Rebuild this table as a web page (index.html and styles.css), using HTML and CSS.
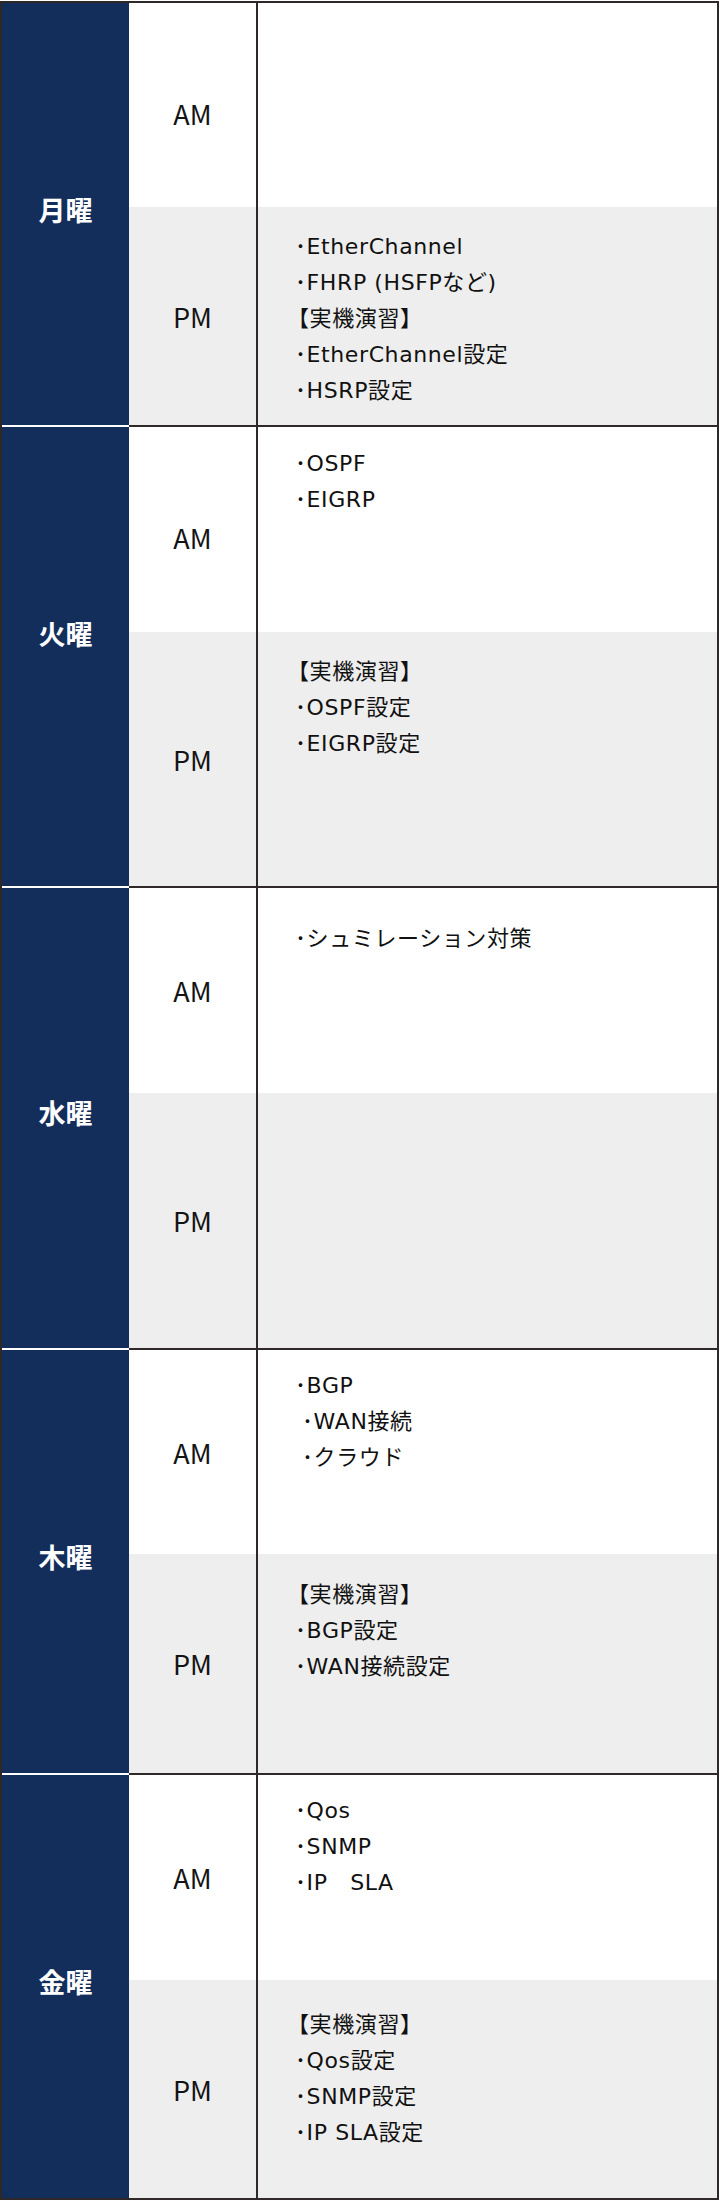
FILE: index.html
```html
<!DOCTYPE html>
<html lang="ja">
<head>
<meta charset="utf-8">
<title>週間スケジュール</title>
<link rel="stylesheet" href="styles.css">
</head>
<body>
<div class="schedule">
  <section class="day mon">
    <div class="dayname"><span>月曜</span></div>
    <div class="slot am shift">AM</div>
    <div class="body am"></div>
    <div class="slot pm">PM</div>
    <div class="body pm pt22">
      <p>･EtherChannel</p>
      <p>･FHRP (HSFPなど)</p>
      <p class="br">【実機演習】</p>
      <p>･EtherChannel設定</p>
      <p>･HSRP設定</p>
    </div>
  </section>
  <section class="day tue">
    <div class="dayname"><span>火曜</span></div>
    <div class="slot am shift">AM</div>
    <div class="body am pt19">
      <p>･OSPF</p>
      <p>･EIGRP</p>
    </div>
    <div class="slot pm">PM</div>
    <div class="body pm pt22">
      <p class="br">【実機演習】</p>
      <p>･OSPF設定</p>
      <p>･EIGRP設定</p>
    </div>
  </section>
  <section class="day wed">
    <div class="dayname low"><span>水曜</span></div>
    <div class="slot am">AM</div>
    <div class="body am pt33">
      <p>･シュミレーション対策</p>
    </div>
    <div class="slot pm">PM</div>
    <div class="body pm"></div>
  </section>
  <section class="day thu">
    <div class="dayname"><span>木曜</span></div>
    <div class="slot am">AM</div>
    <div class="body am pt18">
      <p>･BGP</p>
      <p class="ind">･WAN接続</p>
      <p class="ind">･クラウド</p>
    </div>
    <div class="slot pm">PM</div>
    <div class="body pm pt23">
      <p class="br">【実機演習】</p>
      <p>･BGP設定</p>
      <p>･WAN接続設定</p>
    </div>
  </section>
  <section class="day fri">
    <div class="dayname"><span>金曜</span></div>
    <div class="slot am">AM</div>
    <div class="body am pt18">
      <p>･Qos</p>
      <p>･SNMP</p>
      <p>･IP　SLA</p>
    </div>
    <div class="slot pm">PM</div>
    <div class="body pm pt27">
      <p class="br">【実機演習】</p>
      <p>･Qos設定</p>
      <p>･SNMP設定</p>
      <p>･IP SLA設定</p>
    </div>
  </section>
</div>
</body>
</html>
```

FILE: styles.css
```css
* { box-sizing: border-box; }

body {
  margin: 0;
  background: #ffffff;
  font-family: "Noto Sans CJK JP", "Noto Sans", sans-serif;
  color: #111111;
}

.schedule {
  width: 719px;
  margin-top: 1px;
  border: 2px solid #2f2828;
}

.day {
  display: grid;
  grid-template-columns: 127px 127px 1fr;
}

.day + .day {
  border-top: 2px solid #2f2828;
}

.mon { grid-template-rows: 204px 218px; }
.tue { grid-template-rows: 205px 254px; }
.wed { grid-template-rows: 205px 255px; }
.thu { grid-template-rows: 204px 219px; }
.fri { grid-template-rows: 205px 218px; }

.dayname {
  grid-row: 1 / 3;
  grid-column: 1;
  background: #142e5c;
  color: #ffffff;
  display: flex;
  justify-content: center;
  padding-top: 193px;
}

.dayname.low { padding-top: 211px; }

.dayname span {
  font-size: 27px;
  font-weight: 700;
  line-height: 1;
  height: 27px;
}

.day + .day .dayname {
  box-shadow: 0 -2px 0 #ffffff;
}

.slot {
  grid-column: 2;
  display: flex;
  align-items: center;
  justify-content: center;
  font-size: 27px;
  color: #141414;
}

.slot.shift { padding-top: 16px; }

.body {
  grid-column: 3;
  border-left: 2px solid #2f2828;
  padding: 18px 10px 0 37px;
  font-family: "DejaVu Sans", "Noto Sans CJK JP", sans-serif;
  font-size: 22px;
  letter-spacing: 0.6px;
}

.am { background: #ffffff; }
.pm { background: #eeeeee; }

.body p {
  margin: 0;
  line-height: 36px;
  white-space: pre;
}

.body p.br { margin-left: -8px; }
.body p.ind { padding-left: 7px; }

.pt18 { padding-top: 18px; }
.pt19 { padding-top: 19px; }
.pt22 { padding-top: 22px; }
.pt23 { padding-top: 23px; }
.pt27 { padding-top: 27px; }
.pt33 { padding-top: 33px; }
```
